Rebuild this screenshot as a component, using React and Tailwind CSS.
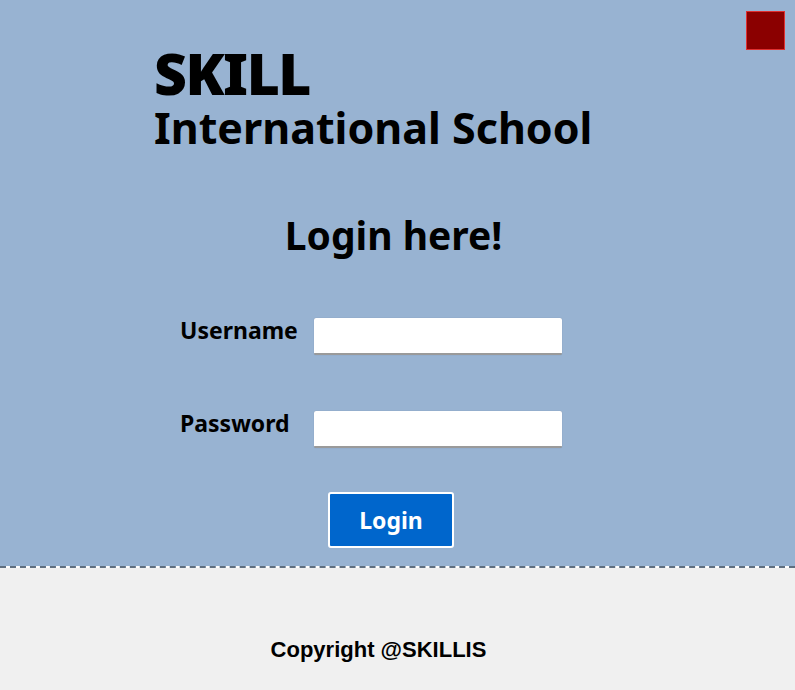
export default function App() {
  const seg = { fontFamily: '"Noto Sans", "Open Sans", sans-serif' };
  return (
    <div className="w-[795px] h-[690px] flex flex-col overflow-hidden" style={seg}>
      <div className="relative h-[566px] bg-[#98b3d2] flex flex-col">
        <div className="absolute left-[746px] top-[11px] w-[39px] h-[39px] bg-[#8b0000] border border-[#e03030]" />
        <div className="pl-[154px] pt-[41px] flex flex-col text-black">
          <div className="text-[57px] font-black leading-[64px] tracking-[-1.5px]">SKILL</div>
          <div className="text-[43px] font-bold leading-[46px]">International School</div>
        </div>
        <div className="mt-[61px] flex justify-center pr-[8px]">
          <div className="text-[39px] font-bold leading-[46px] text-black">Login here!</div>
        </div>
        <div className="mt-[60px] flex flex-col gap-[56px] pl-[180px]">
          <div className="flex items-start">
            <div className="w-[134px] text-[23px] font-bold leading-[24px]">Username</div>
            <div className="w-[248px] h-[37px] bg-white rounded-[2px] border-b-2 border-[#9a9a9a] shadow-[0_0_1px_rgba(0,0,0,0.25)]" />
          </div>
          <div className="flex items-start">
            <div className="w-[134px] text-[23px] font-bold leading-[24px]">Password</div>
            <div className="w-[248px] h-[37px] bg-white rounded-[2px] border-b-2 border-[#9a9a9a] shadow-[0_0_1px_rgba(0,0,0,0.25)]" />
          </div>
        </div>
        <div className="mt-[44px] flex pl-[328px]">
          <button className="w-[126px] h-[56px] bg-[#0066cc] border-2 border-white rounded-[3px] text-white text-[23px] font-bold">Login</button>
        </div>
      </div>
      <div className="border-t-2 border-dashed border-[#5f6f80]" />
      <div className="flex-1 bg-[#f0f0f0] flex justify-center pr-[38px] pt-[69px]">
        <div className="text-[22px] font-bold text-black leading-[26px]" style={{ fontFamily: '"Liberation Sans", Arial, sans-serif' }}>Copyright @SKILLIS</div>
      </div>
    </div>
  );
}
